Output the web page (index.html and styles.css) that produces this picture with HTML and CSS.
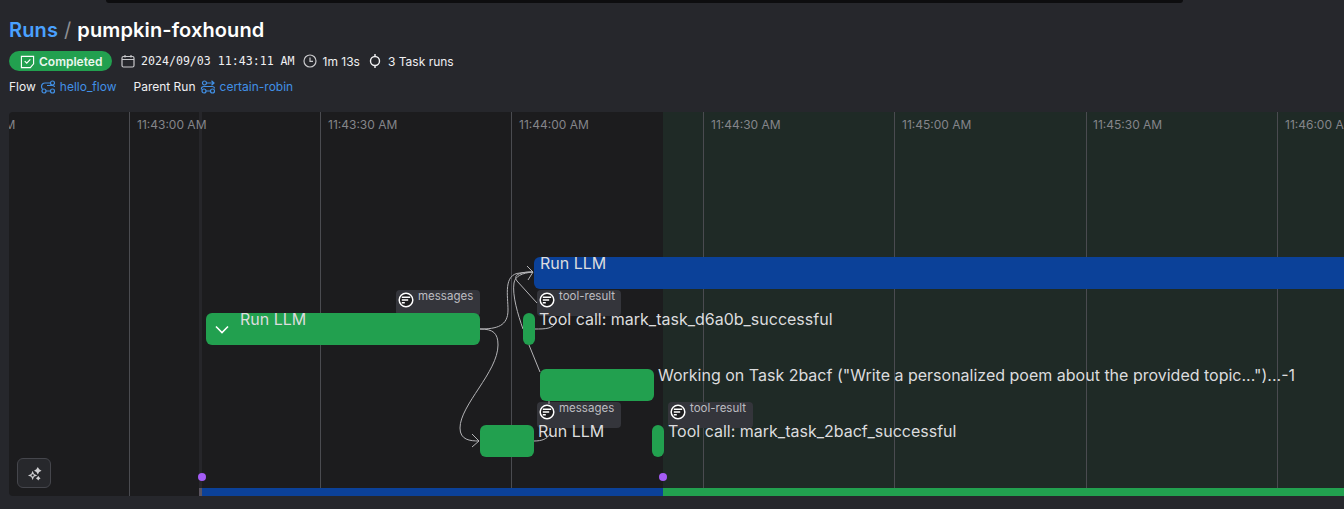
FILE: index.html
```html
<!DOCTYPE html>
<html>
<head>
    <title>pumpkin-foxhound</title>
    <link rel="stylesheet" href="styles.css">
</head>
<body>
    <div class="top-strip"></div>
    <header class="run-header">
        <h1 class="crumbs"><a class="crumb-link">Runs</a><span class="crumb-sep">/</span><span>pumpkin-foxhound</span></h1>
        <div class="meta-row">
            <span class="state-pill">
                <svg class="pill-icon" viewBox="0 0 16 16"><path d="M1.500 2.500h13v8l-3.500 4h-9.500z"/><path d="M5 7.500l2.200 2.200 3.800-4"/></svg>
                Completed
            </span>
            <span class="meta-item">
                <svg class="meta-icon" viewBox="0 0 14 14"><rect x="1" y="2.500" width="12" height="10.500" rx="1.500"/><path d="M1 5.500h12M4 1v2.500M10 1v2.500"/></svg>
                <span class="mono">2024/09/03 11:43:11 AM</span>
            </span>
            <span class="meta-item">
                <svg class="meta-icon" viewBox="0 0 14 14"><circle cx="7" cy="7" r="6"/><path d="M7 3.500v3.800h3"/></svg>
                1m 13s
            </span>
            <span class="meta-item">
                <svg class="meta-icon task-icon" viewBox="0 0 14 14"><circle cx="7" cy="7" r="4.500"/><path d="M7 0v2.500M7 11.500v2.500"/></svg>
                3 Task runs
            </span>
        </div>
        <div class="link-row">
            <span class="link-item">Flow
                <svg class="flow-icon" viewBox="0 0 16 14"><circle cx="12.500" cy="3" r="2"/><circle cx="4" cy="11" r="2"/><circle cx="12.500" cy="11" r="2"/><path d="M10.500 3H5a3.500 3.500 0 0 0-3.500 3.500c0 1 .4 1.800 1 2.500M6 11h4.500M8 3h1M14.500 7c0-1-1-1.500-2-1.500H7"/></svg>
                <a class="run-link">hello_flow</a>
            </span>
            <span class="link-item">Parent Run
                <svg class="flow-icon" viewBox="0 0 16 14"><circle cx="4.500" cy="3" r="2"/><circle cx="4" cy="11" r="2"/><circle cx="12.500" cy="11" r="2"/><path d="M6.500 3H14M11.500 .8L14 3l-2.500 2.200M6 11h4.500M1.500 9.500C1 7.500 2.500 6.500 4 6.500h8c1.500 0 2.500.5 2.500 2"/></svg>
                <a class="run-link">certain-robin</a>
            </span>
        </div>
    </header>

    <main class="timeline">
        <div class="future-zone"></div>
        <div class="start-line"></div>

        <span class="grid-line" style="left:119.500px"></span>
        <span class="grid-line" style="left:311px"></span>
        <span class="grid-line" style="left:502px"></span>
        <span class="grid-line" style="left:693.500px"></span>
        <span class="grid-line" style="left:885px"></span>
        <span class="grid-line" style="left:1076.500px"></span>
        <span class="grid-line" style="left:1268px"></span>

        <span class="tick" style="left:-63px">11:42:30 AM</span>
        <span class="tick" style="left:128px">11:43:00 AM</span>
        <span class="tick" style="left:319px">11:43:30 AM</span>
        <span class="tick" style="left:510px">11:44:00 AM</span>
        <span class="tick" style="left:702px">11:44:30 AM</span>
        <span class="tick" style="left:893px">11:45:00 AM</span>
        <span class="tick" style="left:1084px">11:45:30 AM</span>
        <span class="tick" style="left:1276px">11:46:00 AM</span>

        <div class="artifact artifact-a"><svg class="art-icon" viewBox="0 0 16 16"><circle cx="8" cy="8" r="6.800"/><path d="M3.800 5.200h8.400M3.800 8h6.400M3.800 10.800h3"/></svg>messages</div>
        <div class="artifact artifact-b"><svg class="art-icon" viewBox="0 0 16 16"><circle cx="8" cy="8" r="6.800"/><path d="M3.800 5.200h8.400M3.800 8h6.400M3.800 10.800h3"/></svg>tool-result</div>
        <div class="artifact artifact-c"><svg class="art-icon" viewBox="0 0 16 16"><circle cx="8" cy="8" r="6.800"/><path d="M3.800 5.200h8.400M3.800 8h6.400M3.800 10.800h3"/></svg>messages</div>
        <div class="artifact artifact-d"><svg class="art-icon" viewBox="0 0 16 16"><circle cx="8" cy="8" r="6.800"/><path d="M3.800 5.200h8.400M3.800 8h6.400M3.800 10.800h3"/></svg>tool-result</div>

        <svg class="edges" width="1344" height="384" viewBox="0 0 1344 384">
            <g transform="translate(-9 -112)">
                <path d="M480 329C497 329 508 326 508 310C508 296 503 274 520 273C526 272 530 272 533 272"/>
                <path d="M527 266L533 272L528 280"/>
                <path d="M480 329C493 329 498 333 498 345C498 372 460 405 460 428C460 440 470 441 479 441"/>
                <path d="M472 434L479 441L472 447"/>
                <path d="M535 329C545 329 553 329 556 322M537 303L517 281C512 274 522 272 533 272"/>
                <path d="M523 329C518 315 512 295 514 283C515 276 522 273 533 272"/>
                <path d="M529 345L540 372"/>
                <path d="M549 401V404M534 441C542 441 547 439 550 434"/>
            </g>
        </svg>

        <div class="node node-green node-main">
            <svg class="chevron" viewBox="0 0 14 10"><path d="M1 1.500l6 6 6-6"/></svg>
        </div>
        <div class="node node-green node-tool-a"></div>
        <div class="node node-green node-work"></div>
        <div class="node node-green node-small"></div>
        <div class="node node-green node-tool-b"></div>
        <div class="node node-blue"></div>

        <span class="node-label label-main">Run LLM</span>
        <span class="node-label label-blue">Run LLM</span>
        <span class="node-label label-tool-a">Tool call: mark_task_d6a0b_successful</span>
        <span class="node-label label-work">Working on Task 2bacf ("Write a personalized poem about the provided topic...")...-1</span>
        <span class="node-label label-small">Run LLM</span>
        <span class="node-label label-tool-b">Tool call: mark_task_2bacf_successful</span>

        <span class="dot dot-start"></span>
        <span class="dot dot-end"></span>

        <button class="spark-btn">
            <svg viewBox="0 0 16 16"><path d="M6 5l1.500 3.500L11 10 7.500 11.500 6 15l-1.500-3.500L1 10 4.500 8.500z"/><circle class="spark-hole" cx="6" cy="10" r="1.200"/><path d="M11.500 1l1.500 2.500 2.500 1.500-2.500 1.500-1.500 2.500-1.500-2.500L7.500 5 10 3.500zM12 10.500l1 1.500 1.500 1-1.500 1-1 1.500-1-1.500-1.500-1 1.500-1z"/></svg>
        </button>

        <div class="run-bar">
            <span class="bar-start"></span>
            <span class="bar-blue"></span>
            <span class="bar-green"></span>
        </div>
    </main>
</body>
</html>
```

FILE: styles.css
```css
html, body {
    height: 100%;
}

body {
    margin: 0;
    background-color: #26272c;
    color: #f4f4f5;
    font-family: Inter, "Liberation Sans", sans-serif;
    overflow: hidden;
    display: flex;
    flex-direction: column;
    height: 509px;
}

.top-strip {
    height: 3px;
    margin: 0 161px 0 106px;
    background-color: #0d0d0f;
    border-radius: 0 0 5px 5px;
    flex: none;
}

.run-header {
    flex: none;
    height: 109px;
    padding: 15px 9px 0;
    box-sizing: border-box;
}

.crumbs {
    margin: 0;
    font-size: 20px;
    line-height: 24px;
    font-weight: 600;
    letter-spacing: .12px;
    color: #fff;
    display: flex;
    gap: 6px;
}

.crumb-link {
    color: #4aa1ff;
}

.crumb-sep {
    color: #8d8e93;
    font-weight: 400;
}

.meta-row {
    display: flex;
    align-items: center;
    margin-top: 9px;
    height: 20px;
    font-size: 12px;
    color: #f0f0f2;
}

.state-pill {
    display: flex;
    align-items: center;
    gap: 4px;
    width: 103px;
    height: 20px;
    box-sizing: border-box;
    padding-left: 11px;
    margin-right: 9px;
    border-radius: 10px;
    background-color: #22a04f;
    color: #eaf6ee;
    font-weight: 600;
}

.pill-icon {
    width: 15px;
    height: 15px;
    fill: none;
    stroke: #fff;
    stroke-width: 1.200;
}

.meta-item {
    display: flex;
    align-items: center;
    gap: 6px;
    margin-right: 8px;
    white-space: nowrap;
}

.mono {
    font-family: "DejaVu Sans Mono", "Liberation Mono", monospace;
    font-size: 11.600px;
}

.meta-icon {
    width: 14px;
    height: 14px;
    fill: none;
    stroke: #c9c9cc;
    stroke-width: 1.200;
}

.task-icon {
    stroke: #f0f0f2;
    stroke-width: 1.400;
}

.link-row {
    display: flex;
    gap: 17px;
    margin-top: 8px;
    font-size: 12px;
    line-height: 16px;
    color: #f0f0f2;
}

.link-item {
    display: flex;
    align-items: center;
    gap: 4px;
}

.run-link {
    color: #4190e6;
}

.flow-icon {
    width: 16px;
    height: 14px;
    fill: none;
    stroke: #4190e6;
    stroke-width: 1.200;
}

/* timeline canvas, everything in here sits at its own time position */
.timeline {
    position: relative;
    flex: none;
    height: 384px;
    margin-left: 9px;
    background-color: #1c1c1e;
    border-radius: 4px 0 0 4px;
    overflow: hidden;
}

.future-zone {
    position: absolute;
    left: 654px;
    right: 0;
    top: 0;
    bottom: 0;
    background-color: #1f2a26;
}

.start-line {
    position: absolute;
    left: 190px;
    top: 0;
    bottom: 0;
    width: 3px;
    background-color: #26262a;
}

.grid-line {
    position: absolute;
    top: 0;
    bottom: 0;
    width: 1px;
    background-color: #4a4b50;
}

.tick {
    position: absolute;
    top: 5px;
    font-size: 12px;
    line-height: 15px;
    color: #84858a;
    white-space: nowrap;
}

.artifact {
    position: absolute;
    display: flex;
    gap: 4px;
    box-sizing: border-box;
    width: 84px;
    height: 26px;
    padding: 0 0 0 2px;
    background-color: #34353b;
    border-radius: 4px;
    font-size: 11.500px;
    line-height: 13px;
    color: #bdbdc1;
}

.artifact-a { left: 387px; top: 178px; }
.artifact-b { left: 528px; top: 178px; }
.artifact-c { left: 528px; top: 290px; }
.artifact-d { left: 659px; top: 290px; width: 85px; }

.art-icon {
    width: 16px;
    height: 16px;
    margin-top: 2px;
    flex: none;
    fill: #1c1c1e;
    stroke: #fff;
    stroke-width: 1.500;
}

.edges {
    position: absolute;
    left: 0;
    top: 0;
    fill: none;
    stroke: #b4b4b7;
    stroke-width: 1;
}

.node {
    position: absolute;
    height: 32px;
    border-radius: 6px;
}

.node-green { background-color: #22a04f; }
.node-blue {
    left: 525px;
    right: 0;
    top: 145px;
    background-color: #0b4199;
    border-radius: 6px 0 0 6px;
}

.node-main { left: 197px; top: 201px; width: 274px; }
.node-tool-a { left: 514px; top: 201px; width: 12px; }
.node-work { left: 531px; top: 257px; width: 114px; }
.node-small { left: 471px; top: 313px; width: 54px; }
.node-tool-b { left: 643px; top: 313px; width: 12px; }

.chevron {
    position: absolute;
    left: 9px;
    top: 12px;
    width: 14px;
    height: 10px;
    fill: none;
    stroke: #fff;
    stroke-width: 1.600;
}

.node-label {
    position: absolute;
    font-size: 16px;
    line-height: 20px;
    color: #dcdcde;
    white-space: nowrap;
}

.label-main { left: 231px; top: 197px; }
.label-blue { left: 531px; top: 141px; }
.label-tool-a { left: 530px; top: 197px; }
.label-work { left: 649px; top: 253px; }
.label-small { left: 529px; top: 309px; }
.label-tool-b { left: 659px; top: 309px; }

.dot {
    position: absolute;
    top: 361px;
    width: 8px;
    height: 8px;
    border-radius: 50%;
    background-color: #a45cf5;
}

.dot-start { left: 189px; }
.dot-end { left: 650px; }

.spark-btn {
    position: absolute;
    left: 8px;
    top: 346px;
    width: 34px;
    height: 30px;
    padding: 0;
    display: flex;
    align-items: center;
    justify-content: center;
    background-color: #27282c;
    border: 1px solid #45464c;
    border-radius: 6px;
}

.spark-btn svg {
    width: 15px;
    height: 15px;
    fill: #cfcfd2;
}

.spark-hole {
    fill: #27282c;
}

.run-bar {
    position: absolute;
    left: 190px;
    right: 0;
    bottom: 0;
    height: 8px;
    display: flex;
}

.bar-start {
    width: 3px;
    background-color: #5b5460;
}

.bar-blue {
    width: 461px;
    background-color: #0b4199;
}

.bar-green {
    flex: 1;
    background-color: #22a04f;
}
```
